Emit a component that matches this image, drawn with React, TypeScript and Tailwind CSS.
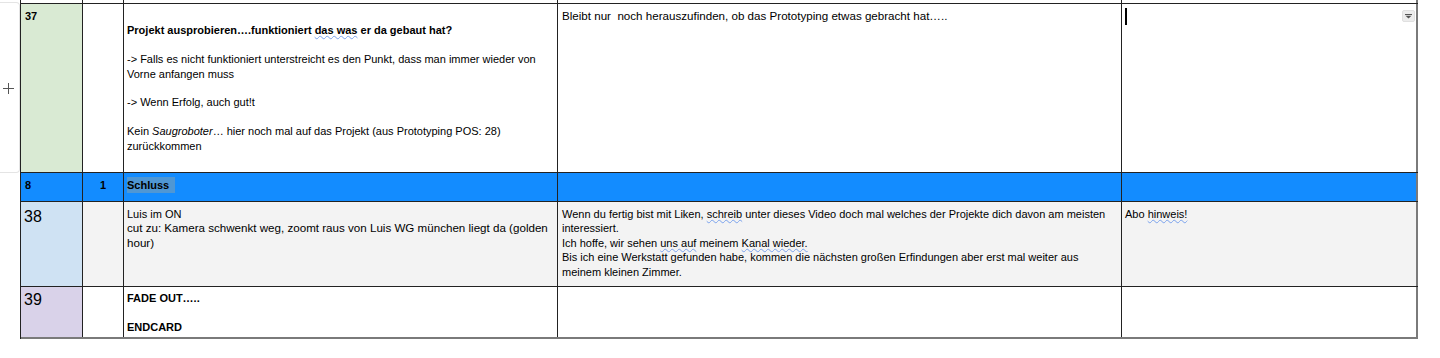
import React from "react";

// column widths of the script table (gutter sits left of it)
const cols = "grid grid-cols-[62px_41px_434px_564px_296px]";
const line = "border-[#222]";

function Squiggle({ children }: { children: React.ReactNode }) {
  return (
    <span className="underline decoration-wavy decoration-[#7aa2ec] decoration-1 underline-offset-[1px]">
      {children}
    </span>
  );
}

function DropdownChip() {
  return (
    <div className="absolute top-[6px] right-[1px] w-[13px] h-[12px] rounded-[2px] bg-[#ececec] border border-[#e0e0e0] flex items-center justify-center">
      <svg width="7" height="5" viewBox="0 0 7 5">
        <rect x="0" y="0" width="7" height="1" fill="#555" />
        <path d="M0.5 1.8 L6.5 1.8 L3.5 4.6 Z" fill="#555" />
      </svg>
    </div>
  );
}

export default function App() {
  return (
    <div className="w-[1440px] h-[358px] bg-white text-black text-[11px] leading-[14.4px] font-['Liberation_Sans',Arial,sans-serif] flex items-start">
      {/* row gutter with the insert handle */}
      <div className="w-[20px] h-[171px] mt-[2px] bg-white border border-l-0 border-[#e4e4e4] rounded-r-[4px] flex items-center justify-center">
        <svg width="11" height="11" viewBox="0 0 11 11" className="mt-[2px] -ml-[2px]">
          <path d="M5.5 0 V11 M0 5.5 H11" stroke="#555" strokeWidth="1" />
        </svg>
      </div>

      <div className={`w-[1398px] border-l ${line}`}>
        {/* tail of the previous row */}
        <div className={`${cols} h-[4px] border-b ${line}`}>
          <div className={`border-r ${line}`} />
          <div className={`border-r ${line}`} />
          <div className={`border-r ${line}`} />
          <div className={`border-r ${line}`} />
          <div className="border-r-2 border-[#7a7a7a]" />
        </div>

        {/* 37 */}
        <div className={`${cols} h-[169px] border-b ${line}`}>
          <div className={`bg-[#d9ead3] border-r ${line} px-[4px] pt-[5px] font-bold`}>37</div>
          <div className={`border-r ${line}`} />
          <div className={`border-r ${line} pl-[3px] pr-[4px] pt-[5px]`}>
            <p>&nbsp;</p>
            <p className="font-bold">
              Projekt ausprobieren….funktioniert <Squiggle>das was</Squiggle> er da gebaut hat?
            </p>
            <p>&nbsp;</p>
            <p>-&gt; Falls es nicht funktioniert unterstreicht es den Punkt, dass man immer wieder von Vorne anfangen muss</p>
            <p>&nbsp;</p>
            <p>-&gt; Wenn Erfolg, auch gut!t</p>
            <p>&nbsp;</p>
            <p>
              Kein <i>Saugroboter</i>… hier noch mal auf das Projekt (aus Prototyping POS: 28) zurückkommen
            </p>
          </div>
          <div className={`border-r ${line} pl-[4px] pr-[4px] pt-[5px] text-[11.6px]`}>
            Bleibt nur&nbsp; noch herauszufinden, ob das Prototyping etwas gebracht hat…..
          </div>
          <div className="relative border-r-2 border-[#7a7a7a] pl-[3px] pt-[4px]">
            <div className="w-[2px] h-[17px] bg-black" />
            <DropdownChip />
          </div>
        </div>

        {/* chapter row: Schluss */}
        <div className={`${cols} h-[29px] border-b ${line} bg-[#138cff] font-bold`}>
          <div className={`border-r ${line} px-[4px] pt-[5px]`}>8</div>
          <div className={`border-r ${line} pt-[5px] text-center`}>1</div>
          <div className={`border-r ${line} pl-[3px] pt-[4px]`}>
            <span className="inline-block bg-[#4f97d4] pr-[6px] py-[1px]">Schluss</span>
          </div>
          <div className={`border-r ${line}`} />
          <div className="border-r-2 border-[#7a7a7a]" />
        </div>

        {/* 38 */}
        <div className={`${cols} h-[85px] border-b ${line} bg-[#f3f3f3]`}>
          <div className={`bg-[#cfe2f3] border-r ${line} px-[3px] pt-[5px] text-[16px] leading-[20px]`}>38</div>
          <div className={`border-r ${line}`} />
          <div className={`border-r ${line} pl-[3px] pr-[4px] pt-[5px]`}>
            <p>Luis im ON</p>
            <p className="text-[11.6px]">
              cut zu: Kamera schwenkt weg, zoomt raus von Luis WG münchen liegt da (golden hour)
            </p>
          </div>
          <div className={`border-r ${line} pl-[4px] pr-[4px] pt-[5px]`}>
            <p>
              Wenn du fertig bist mit Liken, <Squiggle>schreib</Squiggle> unter dieses Video doch mal welches der Projekte dich davon am meisten interessiert.
            </p>
            <p>
              Ich hoffe, wir sehen <Squiggle>uns auf</Squiggle> meinem <Squiggle>Kanal wieder.</Squiggle>
            </p>
            <p>
              Bis ich eine Werkstatt gefunden habe, kommen die nächsten großen Erfindungen aber erst mal weiter aus meinem kleinen Zimmer.
            </p>
          </div>
          <div className="border-r-2 border-[#7a7a7a] pl-[3px] pt-[5px]">
            Abo <Squiggle>hinweis!</Squiggle>
          </div>
        </div>

        {/* 39 */}
        <div className={`${cols} h-[52px] border-b-2 border-b-[#7a7a7a]`}>
          <div className={`bg-[#d9d2e9] border-r ${line} px-[3px] pt-[3px] text-[16px] leading-[20px]`}>39</div>
          <div className={`border-r ${line}`} />
          <div className={`border-r ${line} pl-[3px] pt-[4px] font-bold`}>
            <p>FADE OUT…..</p>
            <p>&nbsp;</p>
            <p>ENDCARD</p>
          </div>
          <div className={`border-r ${line}`} />
          <div className="border-r-2 border-[#7a7a7a]" />
        </div>
      </div>
    </div>
  );
}
